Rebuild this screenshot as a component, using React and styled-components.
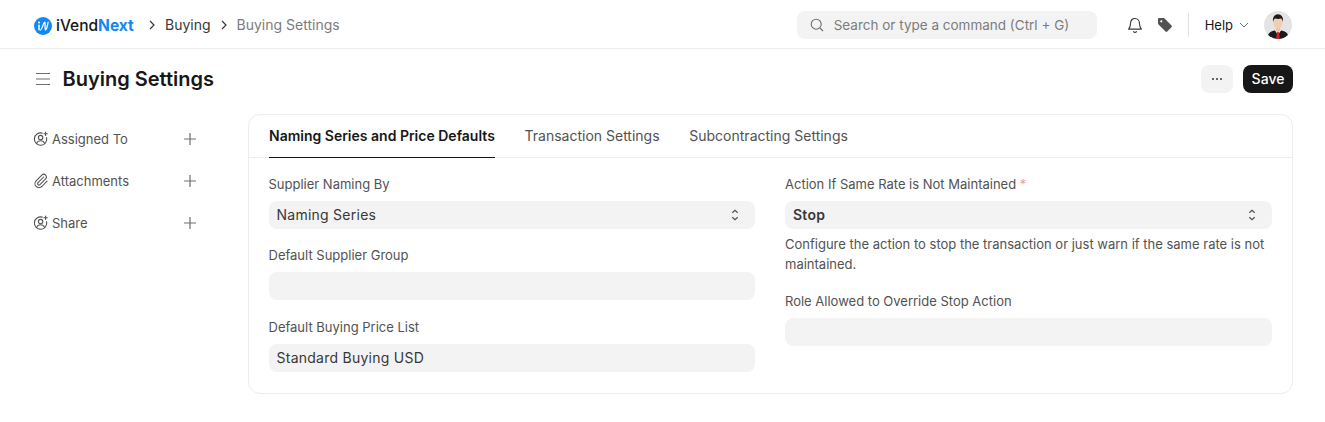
import React from "react";
import styled, { createGlobalStyle } from "styled-components";

const Global = createGlobalStyle`
  html, body { margin: 0; padding: 0; background: #fff; }
  body { font-family: Inter, "Noto Sans", sans-serif; color: #171717; }
  * { box-sizing: border-box; }
`;

const Page = styled.div`
  width: 1325px;
  height: 422px;
  overflow: hidden;
  background: #fff;
`;

const Navbar = styled.header`
  height: 49px;
  border-bottom: 1px solid #ededed;
  display: flex;
  align-items: center;
  padding: 2px 33px 0 34px;
`;

const Brand = styled.div`
  display: flex;
  align-items: center;
  gap: 4px;
  font-size: 15.5px;
  font-weight: 500;
  color: #171717;
  width: 113px;
  padding-top: 1px;
`;

const BrandAccent = styled.span`
  color: #1089f5;
  font-weight: 700;
`;

const Crumbs = styled.nav`
  display: flex;
  align-items: center;
  font-size: 14px;
  gap: 7px;
  padding-bottom: 1px;
  margin-left: -1px;
`;

const Crumb = styled.span`
  color: ${(p) => (p.$muted ? "#7c7c7c" : "#383838")};
`;

const Chevron = styled.svg`
  width: 10px;
  height: 10px;
  margin: 0 1px;
  stroke: #383838;
  fill: none;
  stroke-width: 1.2;
`;

const NavRight = styled.div`
  margin-left: auto;
  display: flex;
  align-items: center;
`;

const Search = styled.div`
  width: 300px;
  height: 28px;
  background: #f3f3f3;
  border-radius: 8px;
  display: flex;
  align-items: center;
  padding-left: 13px;
  gap: 10px;
  font-size: 13.5px;
  color: #7c7c7c;
`;

const NavIcon = styled.span`
  display: flex;
  align-items: center;
  justify-content: center;
  width: 16px;
  margin-left: ${(p) => p.$ml || 0}px;
`;

const Divider = styled.span`
  width: 1px;
  height: 24px;
  background: #e2e2e2;
  margin: 0 16px 0 15px;
`;

const Help = styled.div`
  display: flex;
  align-items: center;
  gap: 6px;
  font-size: 13px;
  color: #171717;
  margin-right: 15px;
`;

const Avatar = styled.svg`
  width: 28px;
  height: 28px;
  display: block;
`;

const PageHead = styled.div`
  height: 65px;
  display: flex;
  align-items: center;
  padding: 0 32px 6px 35px;
`;

const Burger = styled.svg`
  width: 16px;
  height: 14px;
  stroke: #6f6f6f;
  stroke-width: 1.2;
  margin-right: 11.5px;
`;

const Title = styled.h1`
  margin: 0;
  font-size: 20px;
  font-weight: 600;
  line-height: 28px;
  color: #171717;
`;

const Actions = styled.div`
  margin-left: auto;
  display: flex;
  align-items: center;
  gap: 10px;
`;

const MoreButton = styled.button`
  width: 32px;
  height: 28px;
  border: 0;
  border-radius: 8px;
  background: #f3f3f3;
  color: #383838;
  display: flex;
  align-items: center;
  justify-content: center;
  padding: 0;
`;

const SaveButton = styled.button`
  width: 50px;
  height: 28px;
  border: 0;
  border-radius: 8px;
  background: #171717;
  color: #fff;
  font: 500 14px Inter, sans-serif;
  padding: 0;
`;

const Body = styled.div`
  display: grid;
  grid-template-columns: 215px 1045px;
  padding-left: 33px;
`;

const Sidebar = styled.aside`
  display: flex;
  flex-direction: column;
  padding-top: 4px;
`;

const SideRow = styled.div`
  height: 42px;
  display: flex;
  align-items: center;
  width: 164px;
  font-size: 13px;
  color: #525252;
  gap: 3px;
`;

const SideIcon = styled.svg`
  width: 16px;
  height: 16px;
  fill: none;
  stroke: #525252;
  stroke-width: ${(p) => p.$sw || 1.1};
  stroke-linecap: round;
  stroke-linejoin: round;
`;

const Plus = styled.svg`
  width: 14px;
  height: 14px;
  margin-left: auto;
  stroke: #6f6f6f;
  stroke-width: 1.2;
`;

const Card = styled.section`
  height: 280px;
  border: 1px solid #ededed;
  border-radius: 12px;
`;

const Tabs = styled.div`
  height: 43px;
  display: flex;
  gap: 29.7px;
  padding: 0 20px;
  border-bottom: 1px solid #ededed;
`;

const Tab = styled.div`
  height: 43px;
  display: flex;
  align-items: center;
  padding-bottom: 1px;
  font-size: 14px;
  font-weight: ${(p) => (p.$active ? 600 : 400)};
  color: ${(p) => (p.$active ? "#171717" : "#525252")};
  border-bottom: 1px solid ${(p) => (p.$active ? "#171717" : "transparent")};
`;

const Form = styled.div`
  display: grid;
  grid-template-columns: 486.5px 486.5px;
  column-gap: 30px;
  padding: 17px 0 0 19.5px;
`;

const Column = styled.div`
  display: flex;
  flex-direction: column;
`;

const Field = styled.div`
  margin-bottom: 17.6px;
`;

const Label = styled.div`
  font-size: 13px;
  line-height: 18px;
  color: #525252;
  margin-bottom: 7.9px;
`;

const Req = styled.span`
  color: #ef9a9a;
`;

const Control = styled.div`
  height: 28px;
  border-radius: 8px;
  background: #f3f3f3;
  display: flex;
  align-items: center;
  justify-content: space-between;
  padding: 0 8px 1px;
  font-size: 14px;
  font-weight: ${(p) => (p.$bold ? 600 : 400)};
  letter-spacing: 0.25px;
  color: #383838;
`;

const Updown = styled.svg`
  width: 14px;
  height: 14px;
  margin: 1px 5px 0 0;
  fill: none;
  stroke: #525252;
  stroke-width: 1.2;
`;

const HelpText = styled.p`
  margin: 5.2px 0 0;
  font-size: 13px;
  line-height: 20px;
  color: #525252;
`;

const UpdownIcon = () => (
  <Updown viewBox="0 0 14 14">
    <path d="M4.300 4.800 7 2.300l2.700 2.500M4.300 9.200 7 11.700l2.700-2.500" />
  </Updown>
);

const PersonPlus = () => (
  <SideIcon viewBox="0 0 16 16">
    <path d="M13.600 6.600a6.200 6.200 0 1 1-4.400-4.500" />
    <circle cx="7.600" cy="6.600" r="2.200" />
    <path d="M3.600 12.400c.7-1.800 2.200-2.600 4-2.600s3.300.8 4 2.600" />
    <path d="M12.600 1v3.400M10.900 2.700h3.400" />
  </SideIcon>
);

const PlusIcon = () => (
  <Plus viewBox="0 0 14 14">
    <path d="M7 1v12M1 7h12" />
  </Plus>
);

const ChevronIcon = () => (
  <Chevron viewBox="0 0 10 10">
    <path d="M3 1l4 4-4 4" />
  </Chevron>
);

export default function App() {
  return (
    <Page>
      <Global />
      <Navbar>
        <Brand>
          <svg width="18" height="18" viewBox="0 0 18 18">
            <circle cx="9" cy="9" r="9" fill="#1089f5" />
            <path d="M5 8.200v4.600" fill="none" stroke="#fff" strokeWidth="1.500" strokeLinecap="round" />
            <circle cx="5" cy="5.600" r="1" fill="#fff" />
            <path d="M6.500 13c1.800-.6 2.500-7.200 4.300-7.800.7 2.400-.3 6 .8 7.800 1.200-.8 2-4.800 2.500-7.800" fill="none" stroke="#fff" strokeWidth="1.300" strokeLinecap="round" strokeLinejoin="round" />
          </svg>
          <span>iVend<BrandAccent>Next</BrandAccent></span>
        </Brand>
        <Crumbs>
          <ChevronIcon />
          <Crumb>Buying</Crumb>
          <ChevronIcon />
          <Crumb $muted>Buying Settings</Crumb>
        </Crumbs>
        <NavRight>
          <Search>
            <svg width="14" height="14" viewBox="0 0 14 14" fill="none" stroke="#6f6f6f" strokeWidth="1.1">
              <circle cx="6.200" cy="6.200" r="5" />
              <path d="M10 10l3 3" />
            </svg>
            Search or type a command (Ctrl + G)
          </Search>
          <NavIcon $ml={30}>
            <svg width="16" height="17" viewBox="0 0 16 17" fill="none" stroke="#383838" strokeWidth="1.1" strokeLinejoin="round">
              <path d="M8 1.500c-2.700 0-4.400 2-4.400 4.600 0 3.200-.7 4.600-2 6h12.800c-1.300-1.400-2-2.800-2-6C12.400 3.500 10.700 1.500 8 1.500Z" />
              <path d="M6.400 14.200c.3.8.9 1.200 1.600 1.200s1.300-.4 1.600-1.200" />
            </svg>
          </NavIcon>
          <NavIcon $ml={14}>
            <svg width="16" height="16" viewBox="0 0 16 16">
              <path d="M1 2.200C1 1.500 1.500 1 2.200 1h4.300c.3 0 .6.1.8.3l7.200 7.200c.5.5.5 1.200 0 1.700l-4.300 4.300c-.5.5-1.200.5-1.700 0L1.300 7.300A1.100 1.100 0 0 1 1 6.500Z" fill="#525252" />
              <circle cx="4.300" cy="4.300" r="1.100" fill="#fff" />
            </svg>
          </NavIcon>
          <Divider />
          <Help>
            Help
            <svg width="10" height="10" viewBox="0 0 10 10" fill="none" stroke="#6f6f6f" strokeWidth="1">
              <path d="M1 3 5 7l4-4" />
            </svg>
          </Help>
          <Avatar viewBox="0 0 28 28">
            <defs>
              <clipPath id="av"><circle cx="14" cy="14" r="14" /></clipPath>
            </defs>
            <g clipPath="url(#av)">
              <rect width="28" height="28" fill="#e4e4e4" />
              <path d="M3 28c.5-5 2.500-7.500 7.500-8.500h7c5 1 7 3.500 7.500 8.500Z" fill="#1b1b1b" />
              <path d="M10.800 19h6.400L14 24Z" fill="#fff" />
              <path d="M13.100 20.500h1.800l.9 7.500h-3.600Z" fill="#d8202a" />
              <path d="M11.800 16h4.400v4L14 21.500 11.800 20Z" fill="#eec4a6" />
              <ellipse cx="14" cy="11.500" rx="4.500" ry="6" fill="#f3cdb0" />
              <path d="M9.100 11c-.8-5 1.700-7.800 4.900-7.800s5.700 2.800 4.900 7.800c-.3-1.800-1-3-2-3.400-2 .6-3.800.5-5.800 0-1 .4-1.700 1.600-2 3.400Z" fill="#1e1a18" />
            </g>
          </Avatar>
        </NavRight>
      </Navbar>

      <PageHead>
        <Burger viewBox="0 0 16 14">
          <path d="M1 1.500h14M1 7h14M1 12.500h14" />
        </Burger>
        <Title>Buying Settings</Title>
        <Actions>
          <MoreButton aria-label="More">
            <svg width="12" height="4" viewBox="0 0 12 4" fill="#383838">
              <circle cx="2" cy="2" r="1" />
              <circle cx="6" cy="2" r="1" />
              <circle cx="10" cy="2" r="1" />
            </svg>
          </MoreButton>
          <SaveButton>Save</SaveButton>
        </Actions>
      </PageHead>

      <Body>
        <Sidebar>
          <SideRow><PersonPlus />Assigned To<PlusIcon /></SideRow>
          <SideRow>
            <SideIcon viewBox="0 0 24 24" $sw={1.6}>
              <path d="M13.234 20.252 21 12.300" />
              <path d="m16 6-8.414 8.586a2 2 0 0 0 0 2.828 2 2 0 0 0 2.828 0l8.414-8.586a4 4 0 0 0 0-5.656 4 4 0 0 0-5.656 0l-8.415 8.585a6 6 0 1 0 8.486 8.486" />
            </SideIcon>
            Attachments<PlusIcon />
          </SideRow>
          <SideRow><PersonPlus />Share<PlusIcon /></SideRow>
        </Sidebar>

        <Card>
          <Tabs>
            <Tab $active>Naming Series and Price Defaults</Tab>
            <Tab>Transaction Settings</Tab>
            <Tab>Subcontracting Settings</Tab>
          </Tabs>
          <Form>
            <Column>
              <Field>
                <Label>Supplier Naming By</Label>
                <Control>Naming Series<UpdownIcon /></Control>
              </Field>
              <Field>
                <Label>Default Supplier Group</Label>
                <Control />
              </Field>
              <Field>
                <Label>Default Buying Price List</Label>
                <Control>Standard Buying USD</Control>
              </Field>
            </Column>
            <Column>
              <Field>
                <Label>Action If Same Rate is Not Maintained <Req>*</Req></Label>
                <Control $bold>Stop<UpdownIcon /></Control>
                <HelpText>Configure the action to stop the transaction or just warn if the same rate is not maintained.</HelpText>
              </Field>
              <Field>
                <Label>Role Allowed to Override Stop Action</Label>
                <Control />
              </Field>
            </Column>
          </Form>
        </Card>
      </Body>
    </Page>
  );
}
